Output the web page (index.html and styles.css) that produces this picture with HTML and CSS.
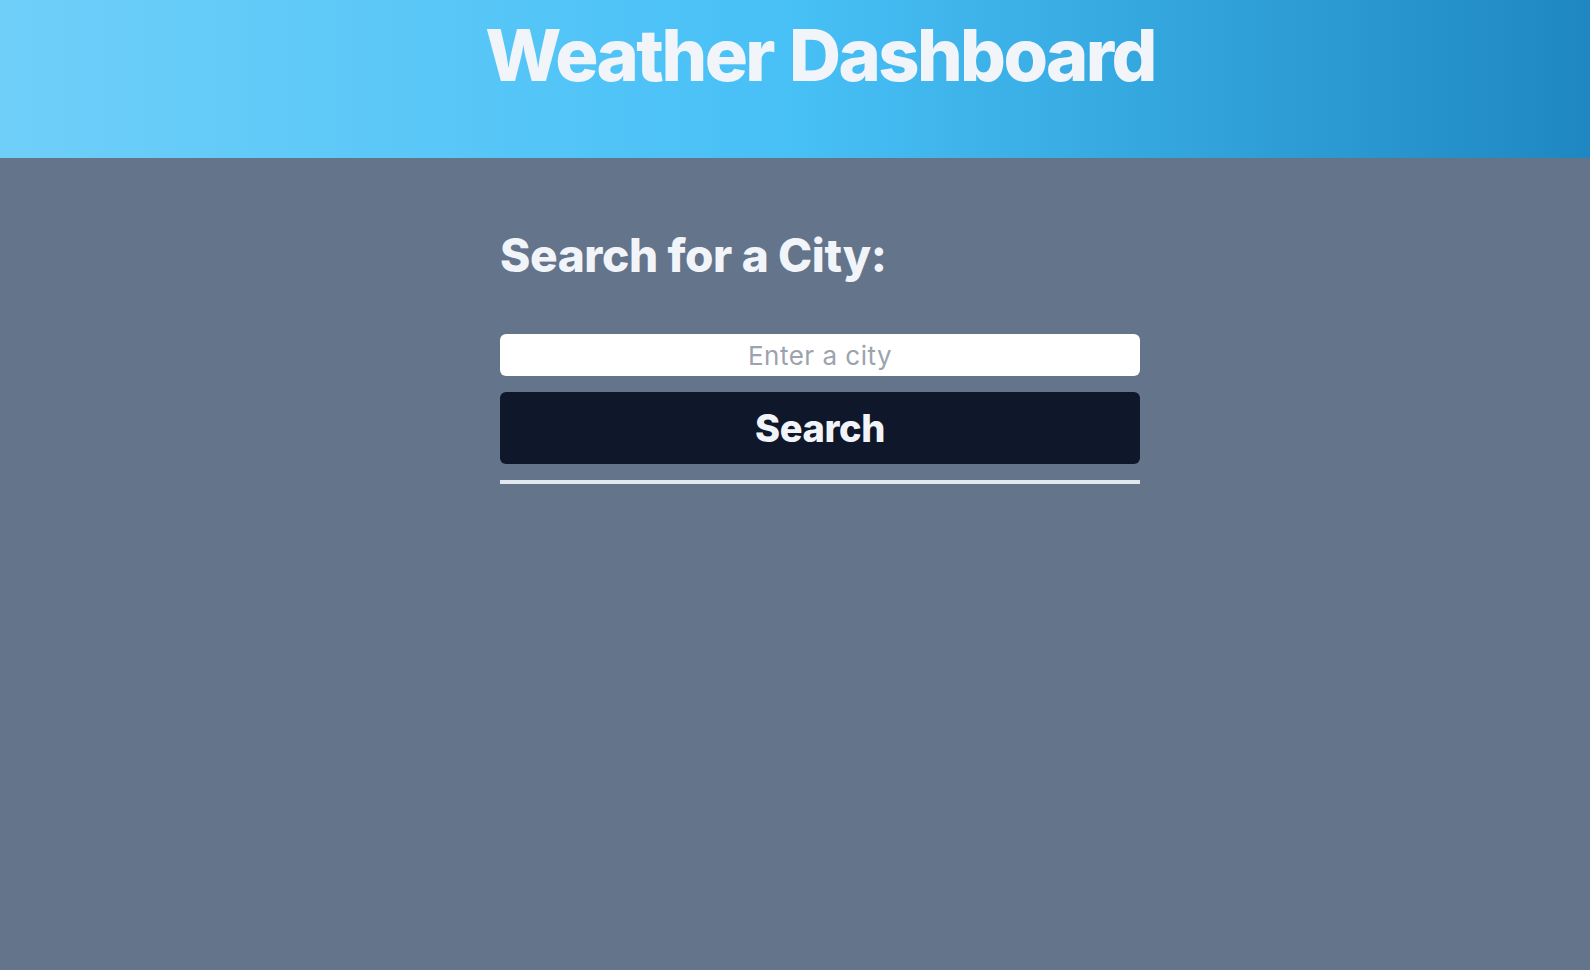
FILE: index.html
```html
<!DOCTYPE html>
<html lang="en">
<head>
<meta charset="utf-8">
<title>Weather Dashboard</title>
<link rel="stylesheet" href="styles.css">
</head>
<body>
<header class="header">
  <h1 class="title">Weather Dashboard</h1>
</header>
<main class="main">
  <section class="search">
    <h2 class="search-title">Search for a City:</h2>
    <input class="search-input" type="text" placeholder="Enter a city">
    <button class="search-btn" type="button">Search</button>
    <div class="divider"></div>
  </section>
</main>
</body>
</html>
```
FILE: styles.css
```css
* { box-sizing: border-box; }
html, body { margin: 0; padding: 0; }
body {
  background: #64748b;
  font-family: Inter, "Noto Sans", sans-serif;
  color: #f1f5f9;
  min-height: 970px;
}
.header {
  height: 158px;
  background: linear-gradient(to right, #6fcff9 0%, #47c0f6 50%, #1e87c2 100%);
  padding-left: 50px;
  display: flex;
  justify-content: center;
  align-items: flex-start;
}
.title {
  margin: 19px 0 0;
  font-size: 72px;
  line-height: 1;
  font-weight: 800;
  letter-spacing: -2.6px;
  word-spacing: 3px;
  color: #f1f5f9;
}
.main {
  padding-left: 50px;
  display: flex;
  justify-content: center;
}
.search {
  width: 640px;
  display: flex;
  flex-direction: column;
  padding-top: 69px;
}
.search-title {
  margin: 0;
  font-size: 46px;
  line-height: 56px;
  font-weight: 800;
  letter-spacing: -0.4px;
  color: #f1f5f9;
}
.search-input {
  margin-top: 51px;
  height: 42px;
  border: none;
  border-radius: 6px;
  background: #ffffff;
  font-family: Inter, "Noto Sans", sans-serif;
  font-size: 26px;
  letter-spacing: 0.5px;
  text-align: center;
  color: #0f172a;
  padding: 0 12px;
  outline: none;
}
.search-input::placeholder { color: #9ca3af; }
.search-btn {
  margin-top: 16px;
  height: 72px;
  border: none;
  border-radius: 6px;
  background: #0f172a;
  color: #f1f5f9;
  font-family: Inter, "Noto Sans", sans-serif;
  font-size: 38px;
  font-weight: 800;
  letter-spacing: -0.4px;
  cursor: pointer;
}
.divider {
  margin-top: 16px;
  height: 4px;
  background: #e2e8f0;
}
```
